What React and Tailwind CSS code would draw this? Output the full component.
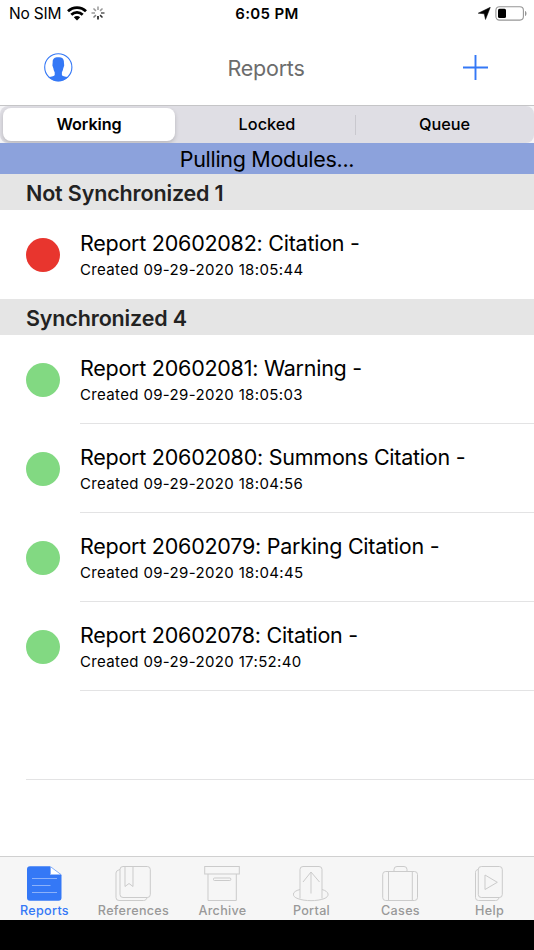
import React, { useState } from 'react';

const working = [
  {
    title: 'Not Synchronized 1',
    dot: 'bg-[#e8352e]',
    reports: [
      { id: 1, name: 'Report 20602082: Citation -', created: 'Created 09-29-2020 18:05:44' },
    ],
  },
  {
    title: 'Synchronized 4',
    dot: 'bg-[#82d982]',
    reports: [
      { id: 2, name: 'Report 20602081: Warning -', created: 'Created 09-29-2020 18:05:03' },
      { id: 3, name: 'Report 20602080: Summons Citation -', created: 'Created 09-29-2020 18:04:56' },
      { id: 4, name: 'Report 20602079: Parking Citation -', created: 'Created 09-29-2020 18:04:45' },
      { id: 5, name: 'Report 20602078: Citation -', created: 'Created 09-29-2020 17:52:40' },
    ],
  },
];

const ReportsIcon = () => (
  <svg width="36" height="36" viewBox="0 0 36 36">
    <path d="M4 .2H24V9H35.500V31.700a3 3 0 0 1-3 3H4a3 3 0 0 1-3-3V3.200a3 3 0 0 1 3-3Z" fill="#3478f6" />
    <path d="M24.500 .7V8.700H35.200Z" fill="#fff" stroke="#3478f6" strokeWidth=".6" />
    <path d="M6 12.500H31M6 19.500H24.500M6 26.500H31" stroke="#8bb1fa" strokeWidth="1" fill="none" />
  </svg>
);

const ReferencesIcon = () => (
  <svg width="36" height="36" viewBox="0 0 36 36" fill="none" stroke="#cbcbcb" strokeWidth="1">
    <rect x="5" y=".5" width="30.300" height="31" rx="3" />
    <path d="M5 3.500 3.300 4.200A3 3 0 0 0 1 7V31.500a3 3 0 0 0 3 3H28.500C30.500 34.500 31.500 33.500 32 31.500" />
    <path d="M10 .5V20.500L14 17.500 18 20.500V.5" />
  </svg>
);

const ArchiveIcon = () => (
  <svg width="36" height="36" viewBox="0 0 36 36" fill="none" stroke="#cbcbcb" strokeWidth="1">
    <rect x=".7" y=".5" width="34.600" height="7.500" />
    <path d="M4 8V34.500H32.300V8" />
    <rect x="9.500" y="12" width="17.300" height="2.500" rx="1" />
  </svg>
);

const PortalIcon = () => (
  <svg width="36" height="36" viewBox="0 0 36 36" fill="none" stroke="#cbcbcb" strokeWidth="1">
    <path d="M7 32.500V3.500A3 3 0 0 1 10 .5H26a3 3 0 0 1 3 3V32.500" />
    <path d="M7 23.500C-1.500 25.500-1.500 30.500 5 32.700 12 35.300 24 35.300 31 32.700 37 30.500 36.500 25.500 29 23.500" />
    <path d="M18 27.500V6M10 16 18 6 26.500 16" />
  </svg>
);

const CasesIcon = () => (
  <svg width="36" height="36" viewBox="0 0 36 36" fill="none" stroke="#cbcbcb" strokeWidth="1">
    <rect x=".7" y="5.500" width="34.800" height="29" rx="3" />
    <path d="M12 5.500V3.500a3 3 0 0 1 3-3H22a3 3 0 0 1 3 3V5.500M6.500 5.500V34.500M30.300 5.500V34.500" />
  </svg>
);

const HelpIcon = () => (
  <svg width="36" height="36" viewBox="0 0 36 36" fill="none" stroke="#cbcbcb" strokeWidth="1">
    <rect x="7.300" y=".5" width="24" height="31" rx="3" />
    <path d="M7.300 3.500C5.500 3.700 4.500 4.700 4.500 6.500V31.500a3 3 0 0 0 3 3H24.500C26.500 34.500 27.500 33.500 28 31.500" />
    <path d="M14 9V23.500L26.300 16.300Z" />
  </svg>
);

const tabs = [
  { name: 'Reports', icon: ReportsIcon },
  { name: 'References', icon: ReferencesIcon },
  { name: 'Archive', icon: ArchiveIcon },
  { name: 'Portal', icon: PortalIcon },
  { name: 'Cases', icon: CasesIcon },
  { name: 'Help', icon: HelpIcon },
];

const StatusBar = () => (
  <div className="grid grid-cols-3 items-center h-7 pl-[9px] pr-[7px] text-black">
    <div className="flex items-center">
      <span className="text-[15.5px] leading-7 tracking-[-0.2px]">No SIM</span>
      <svg width="20" height="15" viewBox="0 0 20 15" className="ml-[6px] -mt-[2px]">
        <g fill="none" stroke="#000" strokeWidth="2.700">
          <path d="M1 5.300C6 .3 14 .3 19 5.300" />
          <path d="M4.300 8.700C7.500 5.500 12.500 5.500 15.700 8.700" />
        </g>
        <path d="M6.800 11.300C8.600 9.600 11.400 9.600 13.200 11.300L10 14.500Z" />
      </svg>
      <svg width="14" height="14" viewBox="-7 -7 14 14" className="ml-[4px] -mt-[2px]" stroke="#000" strokeWidth="1.500">
        <path d="M0 3V6.500" />
        <path d="M2.100 2.100 4.500 4.500" opacity=".8" />
        <path d="M3 0H6.500" opacity=".65" />
        <path d="M2.100-2.100 4.500-4.500" opacity=".4" />
        <path d="M0-3V-6.500" opacity=".4" />
        <path d="M-2.100-2.100-4.500-4.500" opacity=".4" />
        <path d="M-3 0H-6.500" opacity=".4" />
        <path d="M-2.100 2.100-4.500 4.500" opacity=".5" />
      </svg>
    </div>
    <span className="pr-[2px] text-center text-[15px] leading-7 font-semibold tracking-[0.35px]">6:05 PM</span>
    <div className="flex items-center justify-end -mt-[2px]">
      <svg width="13" height="13" viewBox="0 0 13 13">
        <path d="M12.300.3 7.500 12.500 6.200 6.800.2 6.200Z" stroke="#000" strokeWidth=".5" strokeLinejoin="round" />
      </svg>
      <svg width="32" height="15" viewBox="0 0 32 15" className="ml-[4px]">
        <rect x=".9" y=".7" width="27.500" height="13.400" rx="3.500" fill="none" stroke="#969696" strokeWidth="1.100" />
        <rect x="3" y="2.700" width="8" height="9.400" rx="1.500" />
        <path d="M30 5C32 5.500 32 9.500 30 10Z" fill="#969696" />
      </svg>
    </div>
  </div>
);

const NavBar = () => (
  <div className="flex items-center justify-between h-[78px] pl-11 pr-[46px] border-b border-[#c5c5c7]">
    <button className="w-[29px] pt-[2px]">
      <svg width="29" height="29" viewBox="0 0 29 29">
        <circle cx="14.300" cy="14.300" r="13.600" fill="none" stroke="#3478f6" strokeWidth="1.100" />
        <path
          d="M14.300 4.200C17.500 3.800 20.200 5.500 19.900 9L20.200 12.500 19.200 15.500C18.900 17.500 18.400 18.500 17.900 19.200V22C18.200 23.200 20.500 23.700 24.300 24A14 14 0 0 1 4.300 24C8.100 23.700 10.400 23.200 10.700 22V19.200C10.200 18.500 9.700 17.500 9.400 15.500L8.400 12.500 8.700 9C8.400 5.500 11.100 4 14.300 4.200Z"
          fill="#3478f6"
        />
      </svg>
    </button>
    <h1 className="pr-[4px] pt-[3px] text-[21.5px] leading-7 tracking-[-0.25px] text-[#6c6c6c]">Reports</h1>
    <button className="w-[25px] pt-[2px]">
      <svg width="25" height="25" viewBox="0 0 25 25" className="-mt-px">
        <path d="M0 12.500H25M12.500 0V25" stroke="#3478f6" strokeWidth="1.900" />
      </svg>
    </button>
  </div>
);

const App = () => {
  const [segment, setSegment] = useState('Working');
  const [activeTab, setActiveTab] = useState('Reports');

  return (
    <div className="flex flex-col w-[534px] h-[950px] overflow-hidden bg-white text-black font-['Inter','Liberation_Sans',sans-serif]">
      <StatusBar />
      <NavBar />

      <div className="bg-[#f5f5f7]">
        <div className="grid grid-cols-3 h-[37px] pl-[2px] pr-px pt-[2px] rounded-[8px] bg-[#dfdee4]">
          {['Working', 'Locked', 'Queue'].map((name) => (
            <button
              key={name}
              onClick={() => setSegment(name)}
              className={
                segment === name
                  ? 'mr-[4px] ml-px h-[33px] rounded-[8px] bg-white text-[16.2px] font-semibold tracking-[-0.1px] shadow-[0_2px_4px_rgba(0,0,0,0.18)]'
                  : 'h-[33px] text-[16.3px] font-medium'
              }
            >
              <span className={name === 'Locked' ? 'flex items-center justify-center h-[20px] border-r border-[#c9c8ce]' : ''}>{name}</span>
            </button>
          ))}
        </div>
      </div>

      <div className="h-[31px] bg-[#8ca2dc] text-center text-[21.5px] leading-[33px] tracking-[-0.3px]">Pulling Modules...</div>

      <div className="flex-1 min-h-0">
        {working.map((section) => (
          <div key={section.title}>
            <h2 className="h-[36px] pl-[26px] bg-[#e5e5e5] text-[#222] text-[21.5px] leading-[38px] font-semibold tracking-[-0.15px]">{section.title}</h2>
            {section.reports.map((report) => (
              <div key={report.id} className="flex items-center gap-5 h-[89px] pl-[26px]">
                <div className={`w-[34px] h-[34px] rounded-full ${section.dot}`}></div>
                <div className={`flex-1 h-full pt-[19px] border-b ${section.reports.length > 1 ? 'border-[#e3e3e4]' : 'border-transparent'}`}>
                  <p className="text-[21.5px] leading-7 tracking-[-0.25px] whitespace-nowrap">{report.name}</p>
                  <p className="text-[15px] leading-[26px] tracking-[0.35px] whitespace-nowrap">{report.created}</p>
                </div>
              </div>
            ))}
          </div>
        ))}
        <div className="ml-[26px] h-[89px] border-b border-[#e3e3e4]"></div>
      </div>

      <div className="grid grid-cols-6 h-[64px] border-t border-[#d0d0d0] bg-[#f6f6f6]">
        {tabs.map(({ name, icon: Icon }) => (
          <button
            key={name}
            onClick={() => setActiveTab(name)}
            className={`flex flex-col items-center pt-[9px] ${activeTab === name ? 'text-[#3478f6]' : 'text-[#999]'}`}
          >
            <span className="mr-px">
              <Icon />
            </span>
            <span className="text-[12.6px] leading-[18px] font-medium tracking-[0.3px]">{name}</span>
          </button>
        ))}
      </div>
      <div className="h-[30px] bg-black"></div>
    </div>
  );
};

export default App;
